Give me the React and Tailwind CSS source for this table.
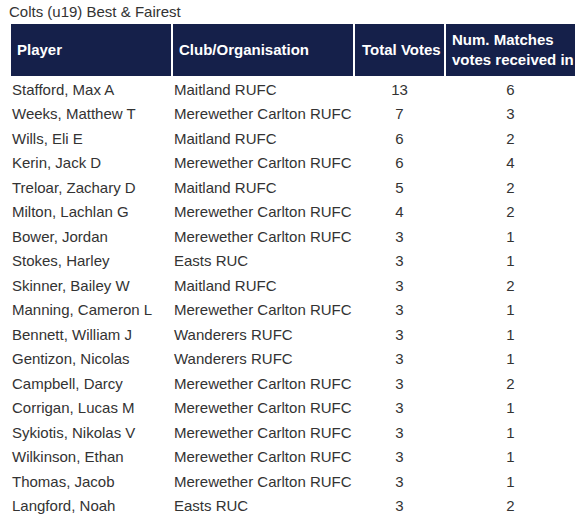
const ROWS = [
  ["Stafford, Max A", "Maitland RUFC", 13, 6],
  ["Weeks, Matthew T", "Merewether Carlton RUFC", 7, 3],
  ["Wills, Eli E", "Maitland RUFC", 6, 2],
  ["Kerin, Jack D", "Merewether Carlton RUFC", 6, 4],
  ["Treloar, Zachary D", "Maitland RUFC", 5, 2],
  ["Milton, Lachlan G", "Merewether Carlton RUFC", 4, 2],
  ["Bower, Jordan", "Merewether Carlton RUFC", 3, 1],
  ["Stokes, Harley", "Easts RUC", 3, 1],
  ["Skinner, Bailey W", "Maitland RUFC", 3, 2],
  ["Manning, Cameron L", "Merewether Carlton RUFC", 3, 1],
  ["Bennett, William J", "Wanderers RUFC", 3, 1],
  ["Gentizon, Nicolas", "Wanderers RUFC", 3, 1],
  ["Campbell, Darcy", "Merewether Carlton RUFC", 3, 2],
  ["Corrigan, Lucas M", "Merewether Carlton RUFC", 3, 1],
  ["Sykiotis, Nikolas V", "Merewether Carlton RUFC", 3, 1],
  ["Wilkinson, Ethan", "Merewether Carlton RUFC", 3, 1],
  ["Thomas, Jacob", "Merewether Carlton RUFC", 3, 1],
  ["Langford, Noah", "Easts RUC", 3, 2],
];

export default function App() {
  return (
    <div className="w-[587px] h-[522px] overflow-hidden bg-white px-[9px] pt-[3px] text-[15px] text-[#333] font-['Liberation_Sans',Arial,sans-serif]">
      <div className="leading-[17px]">Colts (u19) Best &amp; Fairest</div>
      <table className="mt-[2px] border-separate border-spacing-[2px] table-fixed">
        <colgroup>
          <col className="w-[160px]" />
          <col className="w-[180px]" />
          <col className="w-[89px]" />
          <col className="w-[129px]" />
        </colgroup>
        <thead>
          <tr className="bg-[#15204a] text-white text-left h-[52px]">
            <th className="pl-[6px] font-bold">Player</th>
            <th className="pl-[6px] font-bold">Club/Organisation</th>
            <th className="pl-[7px] pr-0 font-bold whitespace-nowrap">Total Votes</th>
            <th className="pl-[6px] pr-0 font-bold leading-[20px] whitespace-nowrap">
              Num. Matches
              <br />
              votes received in
            </th>
          </tr>
        </thead>
        <tbody>
          {ROWS.map(([name, club, votes, matches]) => (
            <tr key={name} className="h-[22.5px] leading-[17px]">
              <td className="pl-[1px] p-0 whitespace-nowrap">{name}</td>
              <td className="pl-[1px] p-0 whitespace-nowrap">{club}</td>
              <td className="p-0 text-center">{votes}</td>
              <td className="p-0 text-center">{matches}</td>
            </tr>
          ))}
        </tbody>
      </table>
    </div>
  );
}
